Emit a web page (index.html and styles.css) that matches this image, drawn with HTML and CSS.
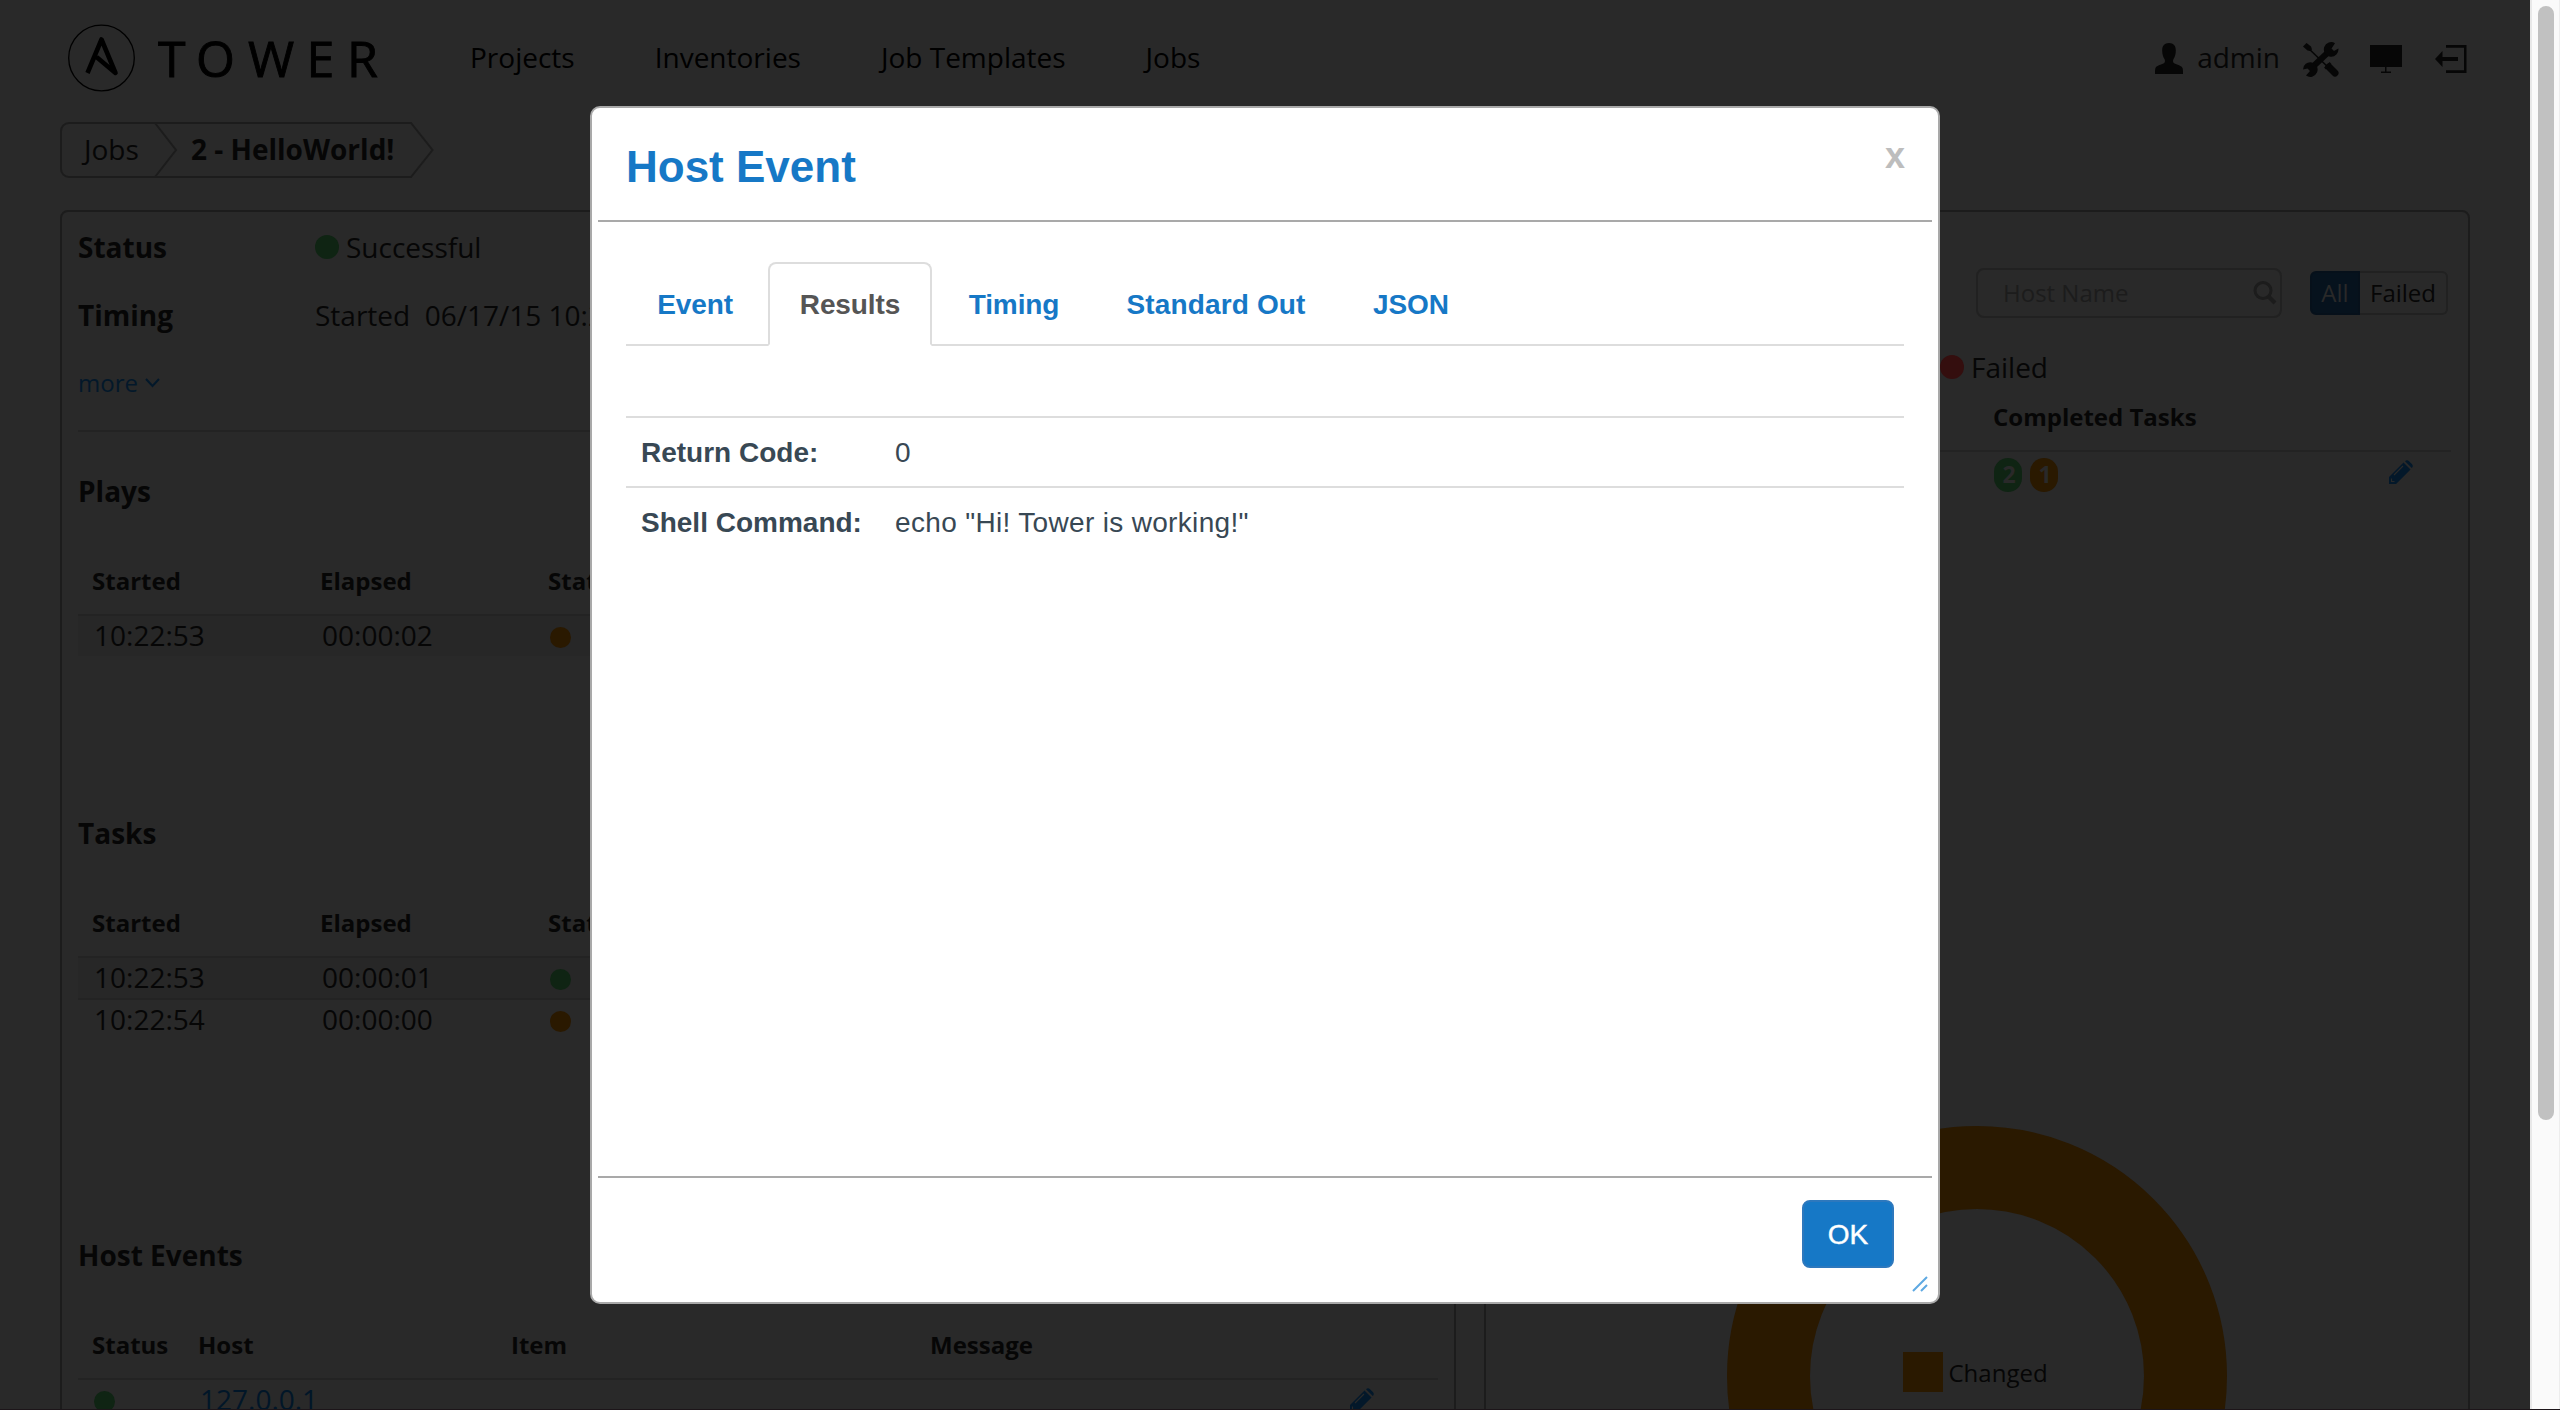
FILE: index.html
```html
<!DOCTYPE html>
<html lang="en">
<head>
<meta charset="utf-8">
<title>Tower - Host Event</title>
<link rel="stylesheet" href="styles.css">
</head>
<body>
<div class="page">
  <header class="navbar">
    <svg class="logo" width="326" height="80" viewBox="0 0 326 80">
      <circle cx="41.5" cy="40" r="32.8" fill="none" stroke="#000" stroke-width="1.3"/>
      <path d="M27.500 55 L41.500 21.500 L55.500 55 L36.500 39" fill="none" stroke="#000" stroke-width="4.600" stroke-linejoin="round"/>
      <text class="wordmark" y="58.500" x="98 136 188 246.500 287">TOWER</text>
    </svg>
    <nav class="nav">
      <span>Projects</span><span>Inventories</span><span>Job Templates</span><span>Jobs</span>
    </nav>
    <div class="tools">
      <svg class="user" width="28" height="31" viewBox="0 0 28 31"><path d="M14 0c4.500 0 6.800 2.800 6.800 7.500 0 4-1 6.500-2.300 8.500-.8 1.500-.6 3.500.6 4.300 2.500 1.500 7.900 2.200 8.600 5.200.3 1.500.3 3.500.3 5.500H0c0-2 0-4 .3-5.500.7-3 6.100-3.700 8.600-5.200 1.200-.8 1.400-2.800.6-4.300C8.200 14 7.200 11.500 7.200 7.500 7.200 2.800 9.500 0 14 0z"/></svg>
      <span class="who">admin</span>
      <svg class="wrench" width="38" height="36" viewBox="0 0 38 36">
        <path d="M4 4 28 27" stroke="#060606" stroke-width="1.600"/>
        <path d="M1 4.500 4.500 1 9 4.500 10 7.500 8 9 5.500 8.500z"/>
        <path d="M27 25 33 31" stroke="#060606" stroke-width="7" stroke-linecap="round"/>
        <path d="M23 26.500 28.500 21" stroke="#060606" stroke-width="2.500"/>
        <path d="M9 26.500 28 8.500" stroke="#060606" stroke-width="6"/>
        <path d="M33 1.200A7.300 7.300 0 1 0 36.400 6.500L32 9 29.500 6.500z"/>
        <path d="M4 33.500A7.300 7.300 0 1 0 1 27.500L5.500 26.500 8 29z"/>
      </svg>
      <svg class="monitor" width="32" height="28" viewBox="0 0 32 28"><path d="M0 0h32v22H16.500v4.500h4.500V28H11v-1.500h4V22H0z"/></svg>
      <svg class="exit" width="32" height="28" viewBox="0 0 32 28"><path d="M11 0h20.500v28H11v-2.800h18V2.800H11zM0 14l7.500-8v6H23v4H7.500v6z"/></svg>
    </div>
  </header>

  <div class="crumbs">
    <svg class="crumb-frame" width="376" height="56" viewBox="0 0 376 56"><path d="M351 1H9a8 8 0 0 0-8 8v38a8 8 0 0 0 8 8h342L372.500 28zM95 1 116 28 95 55" fill="none" stroke="#1c1c1c" stroke-width="2"/></svg>
    <span class="crumb">Jobs</span><b class="crumb-on">2 - HelloWorld!</b>
  </div>

  <main class="panels">
    <section class="panel left">
      <div class="fact"><b>Status</b><i class="dot big green"></i><span>Successful</span></div>
      <div class="fact timing"><b>Timing</b><span class="stamp">Started&nbsp; 06/17/15 10:22:53</span></div>
      <div class="more">more<svg width="15" height="10" viewBox="0 0 15 10"><path d="M1 1l6.500 7L14 1" fill="none" stroke="#03182a" stroke-width="2"/></svg></div>
      <div class="block plays">
        <h2>Plays</h2>
        <div class="row head"><span>Started</span><span>Elapsed</span><span>Status</span></div>
        <div class="row stripe"><span>10:22:53</span><span>00:00:02</span><i class="dot orange"></i></div>
      </div>
      <div class="block tasks">
        <h2>Tasks</h2>
        <div class="row head"><span>Started</span><span>Elapsed</span><span>Status</span></div>
        <div class="row stripe"><span>10:22:53</span><span>00:00:01</span><i class="dot green"></i></div>
        <div class="row second"><span>10:22:54</span><span>00:00:00</span><i class="dot orange"></i></div>
      </div>
      <div class="block events">
        <h2>Host Events</h2>
        <div class="row head"><span>Status</span><span>Host</span><span>Item</span><span>Message</span></div>
        <div class="row"><i class="dot green"></i><span class="link">127.0.0.1</span><span></span><span></span>
          <svg class="pencil" width="24" height="24" viewBox="0 0 24 24"><path d="M0 24V17L14.500 2.500 21.500 9.500 7 24zM16 1.200Q18-.8 20 1.200L22.800 4Q24.800 6 22.800 8z"/><path d="M5 15 14 6M2.500 18.500v3h3" stroke="#292929" stroke-width="1.200" fill="none"/></svg></div>
      </div>
    </section>
    <section class="panel right">
      <div class="filters">
        <div class="search"><span>Host Name</span><svg width="24" height="24" viewBox="0 0 24 24"><circle cx="10" cy="9.500" r="8" fill="none" stroke="#1c1c1c" stroke-width="3"/><path d="M15.500 15.500 22 22" stroke="#1c1c1c" stroke-width="4"/></svg></div>
        <div class="toggle"><span class="on">All</span><span class="off">Failed</span></div>
      </div>
      <div class="legend"><i class="dot big red"></i><span>Failed</span></div>
      <div class="summary-head">Completed Tasks</div>
      <div class="summary-row"><span class="badge green">2</span><span class="badge orange">1</span>
        <svg class="pencil" width="24" height="24" viewBox="0 0 24 24"><path d="M0 24V17L14.500 2.500 21.500 9.500 7 24zM16 1.200Q18-.8 20 1.200L22.800 4Q24.800 6 22.800 8z"/><path d="M5 15 14 6M2.500 18.500v3h3" stroke="#292929" stroke-width="1.200" fill="none"/></svg></div>
      <svg class="donut" width="500" height="500" viewBox="0 0 500 500"><circle cx="250" cy="250" r="208.500" fill="none" stroke="#2a1900" stroke-width="83"/><rect x="176" y="226" width="40" height="40" fill="#2a1900"/><text x="221.500" y="256">Changed</text></svg>
    </section>
  </main>
  <div class="scrollbar"><div class="thumb"></div></div>

  <div class="dialog">
    <div class="dialog-head"><h1>Host Event</h1><span class="close">x</span></div>
    <div class="dialog-body">
      <div class="tabs"><span class="tab t-event">Event</span><span class="tab t-results active">Results</span><span class="tab t-timing">Timing</span><span class="tab t-out">Standard Out</span><span class="tab t-json">JSON</span></div>
      <div class="results">
        <div class="result"><b>Return Code:</b><span>0</span></div>
        <div class="result"><b>Shell Command:</b><span>echo "Hi! Tower is working!"</span></div>
      </div>
    </div>
    <div class="dialog-foot"><span class="ok">OK</span></div>
    <svg class="grip" width="16" height="16" viewBox="0 0 16 16"><path d="M1 15 15 1M9 15l6-6" stroke="#5ea9e2" stroke-width="2"/></svg>
  </div>
</div>
</body>
</html>
```
FILE: styles.css
```css
* { box-sizing: border-box; }
body { margin: 0; background: #292929; }
svg { display: block; flex: none; }
.page {
  position: relative; width: 2560px; height: 1410px; overflow: hidden;
  background: #292929; color: #060606;
  font: 28px/40px "Open Sans", sans-serif;
  border-bottom: 1px solid #1c1519;
}

/* top navigation */
.navbar { display: flex; height: 122px; padding: 18px 0 0 60px; }
.wordmark { font-size: 50px; fill: #000; stroke: #000; stroke-width: .9px; }
.nav { display: flex; gap: 80px; margin: 19px 0 0 84px; color: #000; white-space: nowrap; }
.tools { display: flex; align-items: flex-start; margin-left: auto; padding-right: 93px; fill: #060606; }
.user { margin-top: 25px; }
.who { margin: 19px 22px 0 14px; }
.wrench { margin-top: 24px; }
.monitor { margin: 27px 0 0 30px; }
.exit { margin: 27px 0 0 33px; }

/* breadcrumbs */
.crumbs { position: relative; display: flex; height: 56px; margin-left: 60px; padding: 7px 0 0 24px; }
.crumb-frame { position: absolute; left: 0; top: 0; }
.crumb { width: 107px; }

/* panels */
.panels { display: flex; gap: 28px; height: 1220px; padding: 32px 0 0 60px; }
.panel { border: 2px solid #1c1c1c; border-radius: 8px; height: 1400px; flex: none; }
.left { width: 1396px; padding: 15px 16px 0; }
.right { width: 986px; }
.fact { display: flex; align-items: center; height: 40px; white-space: nowrap; }
.fact b { width: 237px; }
.timing { margin-top: 28px; }
.dot { display: block; flex: none; width: 21px; height: 21px; border-radius: 50%; }
.dot.big { width: 24px; height: 24px; margin-right: 7px; }
.green { background: #0f2413; }
.orange { background: #2a1900; }
.red { background: #340e0e; }
.more { display: flex; gap: 7px; align-items: center; margin-top: 31px; padding-bottom: 30px; height: 66px; border-bottom: 2px solid #232323; font-size: 24px; line-height: 34px; color: #03182a; }
.block h2 { margin: 0 0 53px; font-size: 28px; line-height: 40px; }
.plays { margin-top: 39px; height: 342px; }
.tasks { height: 422px; }
.row { display: grid; grid-template-columns: 228px 228px 1fr; height: 40px; padding-left: 16px; line-height: 38px; }
.row .dot { margin-top: 11px; }
.head { height: 52px; padding-left: 14px; border-bottom: 2px solid #232323; font-size: 24px; font-weight: 700; line-height: 34px; }
.stripe { background: #272727; }
.second { height: 42px; border-top: 2px solid #232323; }
.events .row { grid-template-columns: 106px 313px 419px 1fr 88px; }
.events .head { padding-left: 14px; }
.link { color: #011628; }
.pencil { fill: #03182a; }
.events .pencil { margin-top: 8px; }

/* host summary */
.filters { display: flex; align-items: center; gap: 28px; margin: 56px 0 0 490px; height: 50px; font-size: 24px; line-height: 40px; }
.search { display: flex; align-items: center; justify-content: space-between; width: 306px; height: 50px; padding: 0 3px 0 25px; border: 2px solid #212121; border-radius: 8px; color: #1c1c1c; }
.toggle { display: flex; height: 44px; }
.toggle span { border: 2px solid #212121; text-align: center; line-height: 40px; }
.toggle .on { width: 50px; background: #06121d; border-color: #06101a; border-radius: 6px 0 0 6px; color: #292929; }
.toggle .off { width: 88px; border-left: 0; border-radius: 0 6px 6px 0; }
.legend { display: flex; align-items: center; height: 40px; margin: 29px 0 1px 454px; }
.legend .dot { margin-right: 7px; }
.summary-head { height: 64px; margin: 0 17px; padding: 12px 0 0 490px; border-bottom: 2px solid #232323; font-weight: 700; font-size: 24px; line-height: 34px; }
.summary-row { display: flex; gap: 8px; padding: 6px 0 0 508px; }
.badge { width: 28px; height: 34px; border-radius: 14px; color: #292929; font-weight: 700; font-size: 23px; line-height: 32px; text-align: center; padding-left: 2px; }
.summary-row .pencil { margin: 2px 0 0 330px; margin-left: 323px; }
.donut { margin: 634px 0 0 241px; font-size: 24px; fill: #060606; }

/* browser scrollbar */
.scrollbar { position: absolute; right: 0; top: 0; width: 30px; height: 1410px; padding: 6px 0 0 6px; background: #fafafa; border-left: 2px solid #e8e8e8; border-right: 1px solid #ededed; }
.thumb { width: 16px; height: 1114px; border-radius: 8px; background: #c1c1c1; }

/* host event dialog */
.dialog { position: absolute; left: 590px; top: 106px; width: 1350px; height: 1198px; padding: 0 6px; display: flex; flex-direction: column; background: #fff; border: 2px solid #a9a9a9; border-radius: 10px; font-family: "Liberation Sans", Arial, sans-serif; color: #384854; }
.dialog-head { display: flex; justify-content: space-between; height: 114px; padding: 34px 27px 0 28px; border-bottom: 2px solid #a9a9a9; }
.dialog-head h1 { margin: 0; font-size: 44px; line-height: 50px; color: #1678c6; }
.close { color: #bdbdbd; font-weight: 700; font-size: 36px; line-height: 40px; margin-top: -6px; }
.dialog-body { flex: 1; padding: 40px 28px 0; }
.tabs { display: flex; gap: 4px; height: 84px; border-bottom: 2px solid #ddd; font-weight: 700; color: #1678c6; }
.tab { height: 84px; padding-top: 23px; text-align: center; letter-spacing: -.1px; }
.t-event { width: 138px; }
.t-results { width: 164px; }
.t-timing { width: 156px; }
.t-out { width: 240px; letter-spacing: .15px; }
.t-json { width: 142px; }
.tab.active { padding-top: 21px; border: 2px solid #ddd; border-bottom-color: #fff; border-radius: 8px 8px 0 0; color: #555; }
.results { margin-top: 70px; }
.result { display: flex; height: 70px; padding: 15px 0 0 15px; border-top: 2px solid #ddd; }
.result b { width: 254px; }
.result span { letter-spacing: .33px; }
.dialog-foot { display: flex; justify-content: flex-end; height: 126px; padding: 22px 38px 0 0; border-top: 2px solid #a9a9a9; }
.ok { width: 92px; height: 68px; border: 2px solid #2d78bd; border-radius: 8px; background: #1678c6; color: #fff; text-align: center; line-height: 65px; -webkit-text-stroke: .4px #fff; }
.grip { position: absolute; right: 10px; bottom: 10px; }
```
